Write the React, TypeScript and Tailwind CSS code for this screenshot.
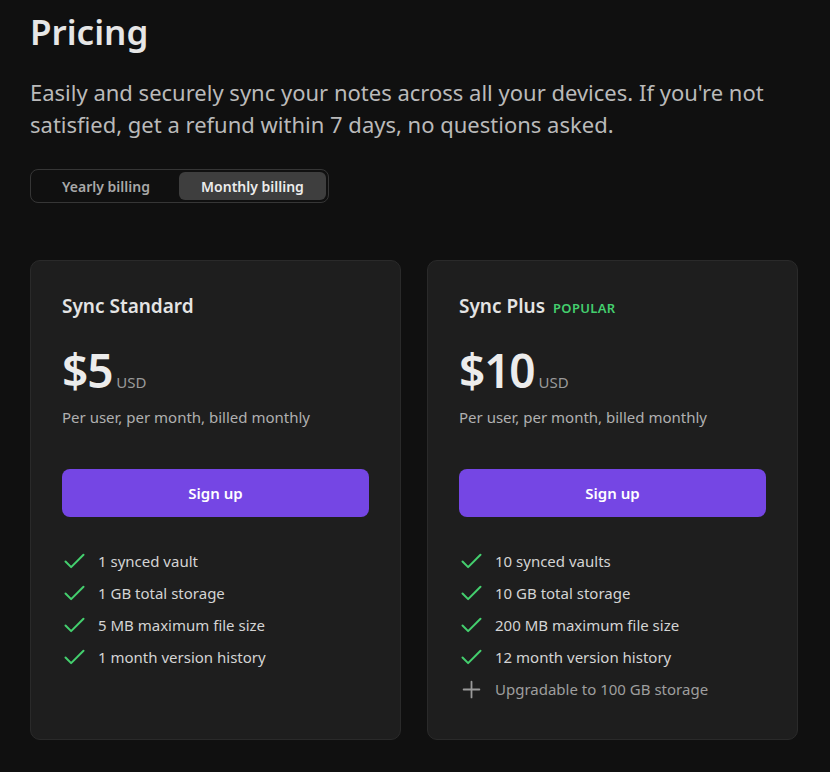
import { Check, Plus } from "lucide-react";

const plans = [
  {
    name: "Sync Standard",
    popular: false,
    price: "$5",
    features: [
      "1 synced vault",
      "1 GB total storage",
      "5 MB maximum file size",
      "1 month version history",
    ],
    extra: null as string | null,
  },
  {
    name: "Sync Plus",
    popular: true,
    price: "$10",
    features: [
      "10 synced vaults",
      "10 GB total storage",
      "200 MB maximum file size",
      "12 month version history",
    ],
    extra: "Upgradable to 100 GB storage",
  },
];

export default function App() {
  return (
    <div
      className="min-h-[772px] bg-[#101010] px-[30px] pt-[12px] pb-8 text-[#dadada]"
      style={{ fontFamily: '"Noto Sans", "Open Sans", sans-serif' }}
    >
      <div className="w-[768px]">
        <h1 className="text-[35px] leading-[40px] font-semibold text-[#e6e6e6]">Pricing</h1>
        <p className="mt-6 text-[22px] leading-[32px] text-[#bababa]">
          Easily and securely sync your notes across all your devices. If you're not satisfied, get a refund within 7 days, no questions asked.
        </p>

        <div className="mt-[29px] inline-flex h-[34px] w-[299px] items-center rounded-lg border border-[#363636] p-[2px]">
          <button className="flex h-full flex-1 items-center justify-center text-[14px] font-semibold text-[#a8a8a8]">
            Yearly billing
          </button>
          <button className="flex h-full w-[147px] items-center justify-center rounded-md bg-[#3e3e3e] text-[14px] font-semibold text-[#ececec]">
            Monthly billing
          </button>
        </div>

        <div className="mt-[57px] grid grid-cols-2 gap-[26px]">
          {plans.map((plan) => (
            <div
              key={plan.name}
              className="rounded-[10px] border border-[#2a2a2a] bg-[#1e1e1e] px-[31px] pt-[31px] pb-[38px]"
            >
              <div className="flex items-baseline gap-2">
                <h3 className="text-[19px] leading-[28px] font-semibold text-[#e4e4e4]">{plan.name}</h3>
                {plan.popular && (
                  <span className="text-[13px] font-semibold tracking-wide text-[#44cf6e]">POPULAR</span>
                )}
              </div>

              <div className="mt-[26px] flex items-baseline gap-1">
                <span className="text-[46px] leading-[48px] font-semibold tracking-tight text-[#ececec]">{plan.price}</span>
                <span className="text-[15px] text-[#9a9a9a]">USD</span>
              </div>

              <p className="mt-[11px] text-[15px] leading-[24px] text-[#b0b0b0]">
                Per user, per month, billed monthly
              </p>

              <button className="mt-10 h-12 w-full rounded-lg bg-[#7546e4] text-[15px] font-semibold text-white">
                Sign up
              </button>

              <ul className="mt-8 flex flex-col gap-2">
                {plan.features.map((f) => (
                  <li key={f} className="flex h-6 items-center gap-[10px] text-[15px] text-[#d4d4d4]">
                    <Check size={27} strokeWidth={1.8} className="-ml-[1px] shrink-0 text-[#44cf6e]" />
                    {f}
                  </li>
                ))}
                {plan.extra && (
                  <li className="flex h-6 items-center gap-[10px] text-[15px] text-[#9e9e9e]">
                    <Plus size={27} strokeWidth={1.6} className="-ml-[1px] shrink-0 text-[#9a9a9a]" />
                    {plan.extra}
                  </li>
                )}
              </ul>
            </div>
          ))}
        </div>
      </div>
    </div>
  );
}
